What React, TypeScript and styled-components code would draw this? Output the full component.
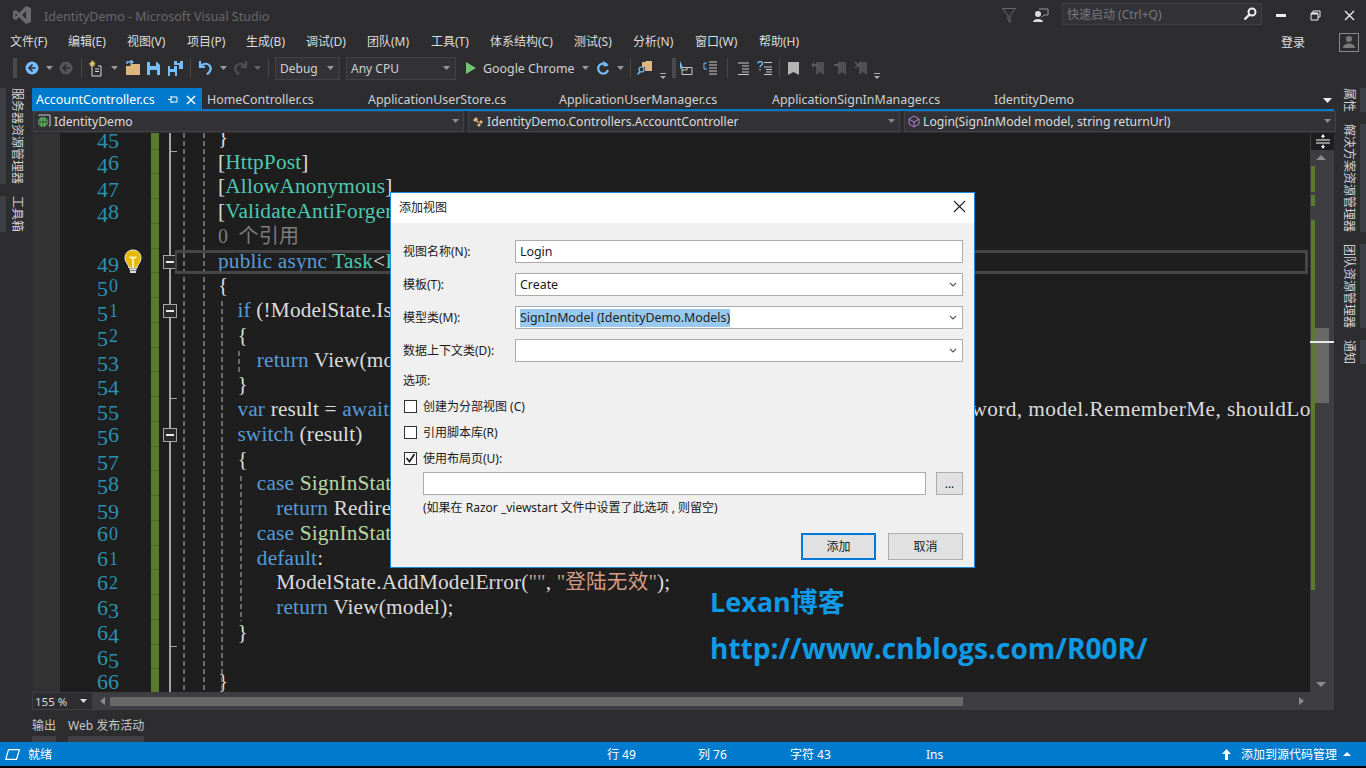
import React from "react";
import styled, { createGlobalStyle } from "styled-components";

const UI = `"Noto Sans", "Noto Sans CJK SC", sans-serif`;
const CODE = `"Liberation Serif", "Noto Sans CJK SC", serif`;

const GlobalStyle = createGlobalStyle`
  html, body { margin: 0; padding: 0; background: #000; }
  * { box-sizing: border-box; }
`;

const Shell = styled.div`
  position: relative;
  width: 1366px;
  height: 768px;
  overflow: hidden;
  display: flex;
  flex-direction: column;
  background: #2d2d30;
  color: #d0d0d0;
  font: 12px ${UI};
`;

/* title bar */
const TitleBar = styled.div`
  height: 30px;
  display: flex;
  align-items: center;
  padding-left: 12px;
`;
const TitleText = styled.div`
  margin-left: 12px;
  padding-top: 2px;
  font-size: 12.5px;
  color: #68686c;
  flex: 1;
`;
const QuickLaunch = styled.div`
  align-self: flex-start;
  width: 200px;
  height: 22px;
  margin: 3px 2px 0 5px;
  border: 1px solid #3f3f46;
  background: #333337;
  color: #78787c;
  display: flex;
  align-items: center;
  justify-content: space-between;
  padding: 0 4px 0 4px;
`;
const WinButton = styled.div`
  width: 34px;
  height: 30px;
  display: flex;
  align-items: center;
  justify-content: center;
`;

/* menu */
const MenuBar = styled.div`
  height: 24px;
  display: flex;
  align-items: center;
  padding-left: 10px;
`;
const MenuItem = styled.div<{ $w: number }>`
  width: ${(p) => p.$w}px;
  margin-bottom: 2px;
  color: #dcdcdc;
  font-size: 12px;
  white-space: nowrap;
`;
const Account = styled.div`
  margin-left: auto;
  display: flex;
  align-items: center;
  gap: 34px;
  padding-right: 7px;
  color: #e0e0e0;
`;
const Avatar = styled.div`
  width: 20px;
  height: 19px;
  border: 1px solid #8a8a8a;
  display: flex;
  align-items: center;
  justify-content: center;
`;

/* toolbar */
const ToolBar = styled.div`
  height: 30px;
  display: flex;
  align-items: center;
  padding: 0 0 2px 13px;
`;
const Slot = styled.div<{ $w: number; $low?: boolean }>`
  flex: 0 0 ${(p) => p.$w}px;
  height: 24px;
  display: flex;
  align-items: ${(p) => (p.$low ? "flex-end" : "center")};
  justify-content: center;
`;
const Grip = styled.div`
  flex: 0 0 4px;
  height: 20px;
  background-image: radial-gradient(#4a4a4e 1px, transparent 1px);
  background-size: 2px 3px;
`;
const Sep = styled.div`
  width: 1px;
  height: 20px;
  background: #46464a;
`;
const ToolCombo = styled.div<{ $w: number; $ml: number }>`
  flex: 0 0 ${(p) => p.$w}px;
  margin-left: ${(p) => p.$ml}px;
  height: 23px;
  border: 1px solid #434346;
  background: #333337;
  color: #d0d0d0;
  display: flex;
  align-items: center;
  justify-content: space-between;
  padding: 0 5px 0 4px;
`;
const ToolLabel = styled.div`
  flex: 0 0 93px;
  white-space: nowrap;
  font-size: 12.4px;
  color: #d0d0d0;
`;

/* body */
const Main = styled.div`
  height: 658px;
  display: flex;
`;
const Rail = styled.div<{ $w: number }>`
  flex: 0 0 ${(p) => p.$w}px;
  padding-top: 4px;
  display: flex;
  flex-direction: column;
  gap: 12px;
`;
const RailTab = styled.div<{ $right?: boolean }>`
  align-self: ${(p) => (p.$right ? "flex-end" : "flex-start")};
  ${(p) =>
    p.$right
      ? "border-right: 6px solid #3f3f46; padding-right: 4px;"
      : "border-left: 6px solid #3f3f46; padding-left: 4px;"}
  writing-mode: vertical-rl;
  text-orientation: sideways;
  font-size: 12px;
  line-height: 14px;
  color: #d8d0d8;
  white-space: nowrap;
`;
const Center = styled.div`
  flex: 1;
  display: flex;
  flex-direction: column;
  padding-top: 4px;
  padding-right: 4px;
  min-width: 0;
`;
const TabStrip = styled.div`
  height: 23px;
  display: flex;
  border-bottom: 2px solid #007acc;
  position: relative;
`;
const Tab = styled.div<{ $w: number; $active?: boolean }>`
  flex: 0 0 ${(p) => p.$w}px;
  display: flex;
  align-items: center;
  padding-left: ${(p) => (p.$active ? 4 : 5)}px;
  padding-top: 3px;
  background: ${(p) => (p.$active ? "#007acc" : "transparent")};
  color: ${(p) => (p.$active ? "#fff" : "#d0d0d0")};
  font-size: 12.4px;
  white-space: nowrap;
`;
const TabTools = styled.div`
  margin-left: auto;
  display: flex;
  align-items: center;
  gap: 8px;
  padding-right: 6px;
`;
const TabMenu = styled.div`
  margin-left: auto;
  align-self: center;
  margin-top: 3px;
  padding-right: 2px;
  display: flex;
`;
const NavBar = styled.div`
  height: 21px;
  display: grid;
  grid-template-columns: 431px 432px 432px;
  column-gap: 4px;
  padding: 0 1px;
`;
const NavCombo = styled.div`
  border: 1px solid #434346;
  background: #333337;
  display: flex;
  align-items: center;
  gap: 3px;
  padding: 0 4px 0 3px;
  font-size: 12.2px;
  color: #dcdcdc;
  white-space: nowrap;
  & > span { flex: 1; }
`;

/* editor */
const EditorRow = styled.div`
  position: relative;
  height: 560px;
  margin-top: 1px;
  display: flex;
  overflow: hidden;
  background: #1e1e1e;
`;
const SelectionMargin = styled.div`
  flex: 0 0 28px;
  background: #333333;
  border-left: 1px solid #2d2d30;
`;
const Lines = styled.div`
  flex: 1;
  margin-top: -8px;
  min-width: 0;
`;
const Line = styled.div`
  height: 24.75px;
  display: flex;
  font: 21.3px/24.75px ${CODE};
  letter-spacing: 0.18px;
  color: #dcdcdc;
  white-space: nowrap;
`;
const LineNo = styled.div`
  flex: 0 0 59px;
  text-align: right;
  color: #2b91af;
  font-size: 22px;
  letter-spacing: 0;
`;
/* the reference font has old-style figures: 3 4 5 7 9 hang, 0 1 2 sit small */
const Digit = styled.span<{ $kind: "low" | "hang" | "tall" }>`
  display: inline-block;
  width: 11px;
  text-align: center;
  ${(p) => p.$kind === "low" && "font-size: 18px;"}
  ${(p) => p.$kind === "hang" && "vertical-align: -4px;"}
  ${(p) => p.$kind === "tall" && "vertical-align: -1px;"}
`;
const Spacer32 = styled.div`
  flex: 0 0 32px;
`;
const Change = styled.div`
  flex: 0 0 8px;
  background: #5a7a2e;
  border-bottom: 1px solid #4c6827;
`;
const Fold = styled.div`
  flex: 0 0 59px;
  position: relative;
  &::before {
    content: "";
    position: absolute;
    left: 10px;
    top: 0;
    bottom: 0;
    width: 2px;
    background: #a5a5a5;
  }
`;
const FoldBox = styled.div`
  position: absolute;
  left: 4px;
  top: 6px;
  width: 14px;
  height: 14px;
  background: #2a2a2a;
  border: 1px solid #a5a5a5;
  display: flex;
  align-items: center;
  justify-content: center;
  &::after {
    content: "";
    width: 8px;
    height: 2px;
    background: #e8e8e8;
  }
`;
const FoldTick = styled.div`
  position: absolute;
  left: 11px;
  top: 1px;
  width: 7px;
  height: 1px;
  background: #a5a5a5;
`;
const Code = styled.div<{ $level?: number }>`
  padding-left: ${(p) => (p.$level || 0) * 19.4}px;
  flex: 1;
  min-width: 0;
  overflow: hidden;
`;
const Head = styled.span<{ $w: number }>`
  display: inline-block;
  vertical-align: top;
  width: ${(p) => p.$w}px;
  overflow: hidden;
`;
const Tail = styled.span`
  letter-spacing: 0.42px;
`;
const Kw = styled.span`
  color: #569cd6;
`;
const Ty = styled.span`
  color: #4ec9b0;
`;
const En = styled.span`
  color: #b8d7a3;
`;
const Str = styled.span`
  color: #d69d85;
  font-size: 20.6px;
`;
const Lens = styled.span`
  color: #7c7c7c;
  font-size: 20px;
`;
const Guide = styled.div<{ $x: number; $top: number; $h: number }>`
  position: absolute;
  left: ${(p) => p.$x}px;
  top: ${(p) => p.$top}px;
  height: ${(p) => p.$h}px;
  width: 2px;
  background-image: repeating-linear-gradient(#6a6a6a 0 5px, transparent 5px 8px);
`;
const CurrentLine = styled.div`
  position: absolute;
  left: 143px;
  right: 26px;
  top: 117px;
  height: 24px;
  border: 3px solid #464646;
  border-left-width: 2px;
  pointer-events: none;
`;
const Bulb = styled.div`
  position: absolute;
  left: 92px;
  top: 116px;
`;
const VScroll = styled.div`
  position: absolute;
  right: 0;
  top: 0;
  bottom: 0;
  width: 24px;
  background: #3e3e42;
`;
const Splitter = styled.div`
  height: 17px;
  margin-left: 1px;
  background: #1e1e1e;
  display: flex;
  align-items: center;
  justify-content: center;
`;
const Arrow = styled.div<{ $down?: boolean }>`
  position: absolute;
  left: 6px;
  ${(p) => (p.$down ? "bottom: 5px;" : "top: 22px;")}
  border-left: 5px solid transparent;
  border-right: 5px solid transparent;
  ${(p) => (p.$down ? "border-top: 5px solid #8a8a8a;" : "border-bottom: 5px solid #8a8a8a;")}
`;
const MapMark = styled.div<{ $top: number; $h: number }>`
  position: absolute;
  left: 1px;
  top: ${(p) => p.$top}px;
  height: ${(p) => p.$h}px;
  width: 4px;
  background: #5a7a2e;
`;
const Thumb = styled.div`
  position: absolute;
  left: 5px;
  top: 195px;
  width: 14px;
  height: 75px;
  background: #686868;
`;
const Caret = styled.div`
  position: absolute;
  left: 0;
  right: 0;
  top: 208px;
  height: 2px;
  background: #e8e8e8;
`;
const HScroll = styled.div`
  height: 18px;
  display: flex;
  align-items: center;
  background: #3e3e42;
  position: relative;
`;
const ZoomBox = styled.div`
  flex: 0 0 59px;
  height: 16px;
  margin-left: 1px;
  background: #2d2d30;
  display: flex;
  align-items: center;
  justify-content: space-between;
  padding: 0 5px 0 2px;
  font-size: 11.5px;
  color: #dcdcdc;
`;
const HArrow = styled.div<{ $left?: boolean }>`
  ${(p) => (p.$left ? "margin-left: 8px;" : "margin-left: 336px;")}
  border-top: 4px solid transparent;
  border-bottom: 4px solid transparent;
  ${(p) => (p.$left ? "border-right: 5px solid #8a8a8a;" : "border-left: 5px solid #8a8a8a;")}
`;
const HThumb = styled.div`
  flex: 0 0 853px;
  margin-left: 5px;
  height: 9px;
  background: #686868;
`;
const OutputTabs = styled.div`
  flex: 1;
  display: flex;
  gap: 12px;
  align-items: flex-end;
`;
const OutputTab = styled.div`
  height: 32px;
  border-bottom: 6px solid #3f3f46;
  padding-top: 6px;
  font-size: 12px;
  color: #c8c8c8;
  white-space: nowrap;
`;

/* status */
const StatusBar = styled.div`
  height: 24px;
  background: #007acc;
  color: #fff;
  display: flex;
  align-items: center;
  padding-left: 5px;
  font-size: 12px;
`;
const StatusCell = styled.div<{ $w: number }>`
  flex: 0 0 ${(p) => p.$w}px;
  white-space: nowrap;
`;
const BlackEdge = styled.div`
  height: 2px;
  background: #000;
`;

/* dialog */
const Dialog = styled.div`
  position: absolute;
  left: 390px;
  top: 192px;
  width: 585px;
  height: 376px;
  background: #f0f0f0;
  border: 1px solid #1b88d8;
  color: #1a1a1a;
  font-size: 12px;
`;
const DialogTitle = styled.div`
  height: 30px;
  background: #fff;
  display: flex;
  align-items: center;
  justify-content: space-between;
  padding: 0 8px 3px;
`;
const DialogBody = styled.div`
  padding: 17px 11px 0 12px;
`;
const Field = styled.div`
  display: grid;
  grid-template-columns: 112px 1fr;
  align-items: center;
  height: 23px;
  margin-bottom: 10px;
  & > span:first-child { margin-top: -2px; }
`;
const InputBox = styled.div`
  height: 23px;
  background: #fff;
  border: 1px solid #ababab;
  display: flex;
  align-items: center;
  justify-content: space-between;
  padding: 0 5px 0 4px;
  color: #1a1a1a;
  font-size: 12.4px;
`;
const Selected = styled.span`
  background: #99c9ef;
  color: #222;
  line-height: 18px;
`;
const SectionLabel = styled.div`
  height: 18px;
  line-height: 18px;
  margin: 0 0 3px;
`;
const CheckRow = styled.div`
  height: 26px;
  display: flex;
  align-items: center;
  gap: 6px;
  margin-left: 1px;
`;
const CheckBox = styled.div`
  width: 13px;
  height: 13px;
  background: #fff;
  border: 1px solid #333;
  display: flex;
  align-items: center;
  justify-content: center;
`;
const LayoutRow = styled.div`
  display: flex;
  gap: 10px;
  margin: 1px 0 0 20px;
`;
const LayoutInput = styled(InputBox)`
  width: 503px;
`;
const SmallButton = styled.div`
  width: 27px;
  height: 23px;
  background: #e1e1e1;
  border: 1px solid #adadad;
  text-align: center;
  line-height: 22px;
`;
const Hint = styled.div`
  margin-left: 20px;
  height: 25px;
  line-height: 25px;
  white-space: nowrap;
`;
const DialogButtons = styled.div`
  margin-top: 13px;
  display: flex;
  justify-content: flex-end;
  gap: 12px;
`;
const DialogButton = styled.div<{ $primary?: boolean }>`
  width: 75px;
  height: 27px;
  background: #e1e1e1;
  border: 1px solid ${(p) => (p.$primary ? "#0078d7" : "#adadad")};
  ${(p) => p.$primary && "box-shadow: inset 0 0 0 1px #0078d7;"}
  text-align: center;
  line-height: 25px;
`;

const Watermark = styled.div`
  position: absolute;
  left: 710px;
  top: 579px;
  color: #0f9ae6;
  font: 700 28.05px/46px "Open Sans", "Noto Sans CJK SC", sans-serif;
  white-space: nowrap;
`;
const WatermarkName = styled.div`
  font-size: 27px;
`;

const Down = ({ c = "#bbb", w = 7 }: { c?: string; w?: number }) => (
  <svg width={w} height={4} viewBox="0 0 7 4">
    <path d="M0 0h7L3.5 4z" fill={c} />
  </svg>
);
const LowDown = () => (
  <svg width="8" height="8" viewBox="0 0 8 8">
    <path d="M1 1h6v1H1zM1 4h6L4 7z" fill="#aaa" />
  </svg>
);
const Chevron = () => (
  <svg width="8" height="5" viewBox="0 0 8 5">
    <path d="M1 1l3 3 3-3" fill="none" stroke="#555" strokeWidth="1.1" />
  </svg>
);

const VsLogo = () => (
  <svg width="20" height="20" viewBox="0 0 20 20">
    <path
      fillRule="evenodd"
      d="M14 1l5 2v14l-5 2-7-7-3 3-3-1.5v-7L4 5l3 3zM14 6l-4 4 4 4zM3.500 8v4l2-2z"
      fill="#6b6b6e"
    />
  </svg>
);
const BackIcon = ({ c, a }: { c: string; a: string }) => (
  <svg width="14" height="14" viewBox="0 0 14 14">
    <circle cx="7" cy="7" r="6.500" fill={c} />
    <path d="M7.500 3.500L4 7l3.500 3.500M4 7h6.500" stroke={a} strokeWidth="1.600" fill="none" />
  </svg>
);
const NewIcon = () => (
  <svg width="16" height="17" viewBox="0 0 16 17">
    <path d="M4 6v10h9V6h-3" fill="none" stroke="#ddd" />
    <path d="M7 9h4M7 11.500h4" stroke="#ddd" />
    <path d="M4 0l1 2 2-1-1 2 2 1-2 .5 1 2-2-1-1 2-.5-2-2 1 1-2-2-.5 2-1z" fill="#e8c46a" />
  </svg>
);
const OpenIcon = () => (
  <svg width="16" height="16" viewBox="0 0 16 16">
    <path d="M1 6h4l1-2h9v11H1z" fill="#dcb67a" />
    <path d="M2 4V2h5M5.500 0L8 2 5.500 4" fill="none" stroke="#75beff" strokeWidth="1.300" />
  </svg>
);
const SaveIcon = () => (
  <svg width="13" height="13" viewBox="0 0 13 13">
    <path d="M0 0h10l3 3v10H0z" fill="#75beff" />
    <path d="M3 0h6v4H3zM3 8h7v5H3z" fill="#2d2d30" />
  </svg>
);
const SaveAllIcon = () => (
  <svg width="15" height="15" viewBox="0 0 15 15">
    <path d="M6 0h9v8h-4V4H6z" fill="#75beff" />
    <path d="M0 5h9v10H0z" fill="#75beff" />
    <path d="M2 5h4v3H2zM2 11h5v4H2zM9 0h3v2H9z" fill="#2d2d30" />
  </svg>
);
const UndoIcon = ({ c }: { c: string }) => (
  <svg width="15" height="16" viewBox="0 0 15 16">
    <path d="M2 1v6h5M2.500 6.500C5 3 9 3 11.500 5.500c2.500 3 1 6-2.500 9" fill="none" stroke={c} strokeWidth="2.200" />
  </svg>
);
const RedoIcon = () => (
  <svg width="15" height="16" viewBox="0 0 15 16">
    <path d="M13 1v6H8M12.500 6.500C10 3 6 3 3.500 5.500c-2.500 3-1 6 2.500 9" fill="none" stroke="#505052" strokeWidth="2.200" />
  </svg>
);
const PlayIcon = () => (
  <svg width="10" height="12" viewBox="0 0 10 12">
    <path d="M0 0l10 6-10 6z" fill="#71c671" />
  </svg>
);
const RefreshIcon = () => (
  <svg width="14" height="15" viewBox="0 0 14 15">
    <path d="M11.500 5A5 5 0 1 0 12 9" fill="none" stroke="#75beff" strokeWidth="2.200" />
    <path d="M7 0l5 3-4 3z" fill="#75beff" />
  </svg>
);
const FolderSearchIcon = () => (
  <svg width="16" height="16" viewBox="0 0 16 16">
    <path d="M5 2h3l1-1h6v10H8V7H5z" fill="#dcb67a" />
    <circle cx="4.500" cy="9.500" r="2.500" fill="none" stroke="#75beff" strokeWidth="1.200" />
    <path d="M3 11.500L.5 14.500" stroke="#75beff" strokeWidth="1.500" />
  </svg>
);
const CommentIcon = () => (
  <svg width="14" height="15" viewBox="0 0 14 15">
    <path d="M1 0v8l2.500-2.500z" fill="#75beff" />
    <path d="M3 6.500h10v7H3zM3 9h5V6.500" fill="none" stroke="#ccc" />
  </svg>
);
const ListIcon = () => (
  <svg width="15" height="15" viewBox="0 0 15 15">
    <path d="M6 1h8M6 4h8M6 7h8M6 10h8M6 13h8" stroke="#ccc" />
    <path d="M4 2H1v6h3" fill="none" stroke="#75beff" />
  </svg>
);
const IndentIcon = () => (
  <svg width="13" height="13" viewBox="0 0 13 13">
    <path d="M1 1h11M5 4h7M5 7h7M5 10h7M1 12.500h11" stroke="#ccc" />
  </svg>
);
const HelpIndentIcon = () => (
  <svg width="15" height="14" viewBox="0 0 15 14">
    <path d="M7 6h8M9 8.500h6M9 11h6M7 13.500h8M7 1.500h8" stroke="#ccc" />
    <path d="M1 2.500C1 0 5.500 0 5.500 2.500 5.500 4.500 3 4 3 6.500M3 8v1.500" fill="none" stroke="#75beff" strokeWidth="1.400" />
  </svg>
);
const BookmarkIcon = ({ c = "#b4b4b4", mark }: { c?: string; mark?: "l" | "r" | "x" }) => (
  <svg width="15" height="15" viewBox="0 0 15 15">
    <path d={mark ? "M5 1h8v13l-4-3-4 3z" : "M2 1h11v13l-5.500-3L2 14z"} fill={c} />
    {mark === "l" && <path d="M0 4l3-3v2h4v2H3v2z" fill="#5a5a5c" />}
    {mark === "r" && <path d="M8 4L5 1v2H1v2h4v2z" fill="#5a5a5c" />}
    {mark === "x" && <path d="M1 1l6 6M7 1L1 7" stroke="#5a5a5c" strokeWidth="1.500" />}
  </svg>
);
const ProjectIcon = () => (
  <svg width="14" height="14" viewBox="0 0 14 14">
    <path d="M2 2V1h11v11h-1" fill="none" stroke="#ccc" />
    <circle cx="6" cy="8" r="5" fill="#5fb85f" />
    <path d="M1 8h10M6 3v10M3 4.500v7M9 4.500v7" stroke="#2d2d30" strokeWidth=".7" />
  </svg>
);
const ClassIcon = () => (
  <svg width="12" height="13" viewBox="0 0 12 13">
    <path d="M1 5l3-3 2 2-1 1 2 2-1 1-2-2-1 1zM7 7l2-2 2 2-2 2zM5 10l2-2 2 2-2 2z" fill="#dcb67a" />
  </svg>
);
const CubeIcon = () => (
  <svg width="12" height="13" viewBox="0 0 12 13">
    <path d="M6 1l5 3v5l-5 3-5-3V4zM1 4l5 3 5-3M6 7v5" fill="none" stroke="#b180d7" />
  </svg>
);
const BulbIcon = () => (
  <svg width="18" height="26" viewBox="0 0 18 26">
    <path d="M9 1C4 1 1 4.500 1 9c0 4.500 3.500 6 4 10h8c.5-4 4-5.500 4-10C17 4.500 14 1 9 1z" fill="#e6b800" stroke="#e8e8e8" />
    <path d="M5.500 8.500h7M9 8.500v10" stroke="#f5f0c8" strokeWidth="1.800" />
    <path d="M5.500 20.500h7M6 23h6" stroke="#ddd" strokeWidth="1.800" />
  </svg>
);

const OldNum = ({ n }: { n: number }) => (
  <>
    {String(n)
      .split("")
      .map((d, i) => (
        <Digit key={i} $kind={"012".includes(d) ? "low" : "34579".includes(d) ? "hang" : "tall"}>
          {d}
        </Digit>
      ))}
  </>
);

const menus: [string, number][] = [
  ["文件(F)", 58],
  ["编辑(E)", 59],
  ["视图(V)", 60],
  ["项目(P)", 59],
  ["生成(B)", 60],
  ["调试(D)", 61],
  ["团队(M)", 64],
  ["工具(T)", 59],
  ["体系结构(C)", 84],
  ["测试(S)", 59],
  ["分析(N)", 62],
  ["窗口(W)", 64],
  ["帮助(H)", 60],
];

const docTabs: [string, number][] = [
  ["HomeController.cs", 161],
  ["ApplicationUserStore.cs", 191],
  ["ApplicationUserManager.cs", 213],
  ["ApplicationSignInManager.cs", 222],
  ["IdentityDemo", 120],
];

type Row = {
  no?: number;
  level?: number;
  box?: boolean;
  code?: React.ReactNode;
};

const rows: Row[] = [
  { no: 45, code: "}" },
  { no: 46, code: <>[<Ty>HttpPost</Ty>]</> },
  { no: 47, code: <>[<Ty>AllowAnonymous</Ty>]</> },
  { no: 48, code: <>[<Ty>ValidateAntiForgeryToken</Ty>]</> },
  { code: <Lens>0 &nbsp;个引用</Lens> },
  { no: 49, box: true, code: <><Kw>public async</Kw> <Ty>Task</Ty>&lt;<Ty>IActionResult</Ty>&gt; Login(SignInModel model)</> },
  { no: 50, code: "{" },
  { no: 51, box: true, level: 1, code: <><Kw>if</Kw> (!ModelState.IsValid)</> },
  { no: 52, level: 1, code: "{" },
  { no: 53, level: 2, code: <><Kw>return</Kw> View(model);</> },
  { no: 54, level: 1, code: "}" },
  {
    no: 55,
    level: 1,
    code: (
      <>
        <Head $w={734}>
          <Kw>var</Kw> result = <Kw>await</Kw> _signInManager
        </Head>
        <Tail>word, model.RememberMe, shouldLockout: false);</Tail>
      </>
    ),
  },
  { no: 56, box: true, level: 1, code: <><Kw>switch</Kw> (result)</> },
  { no: 57, level: 1, code: "{" },
  { no: 58, level: 2, code: <><Kw>case</Kw> <En>SignInStatus</En>.Success:</> },
  { no: 59, level: 3, code: <><Kw>return</Kw> RedirectToLocal(returnUrl);</> },
  { no: 60, level: 2, code: <><Kw>case</Kw> <En>SignInStatus</En>.Failure:</> },
  { no: 61, level: 2, code: <><Kw>default</Kw>:</> },
  { no: 62, level: 3, code: <>ModelState.AddModelError(<Str>""</Str>, <Str>"登陆无效"</Str>);</> },
  { no: 63, level: 3, code: <><Kw>return</Kw> View(model);</> },
  { no: 64, level: 1, code: "}" },
  { no: 65 },
  { no: 66, code: "}" },
];

const ticks = [1, 11, 21];

export default function App() {
  return (
    <Shell>
      <GlobalStyle />
      <TitleBar>
        <VsLogo />
        <TitleText>IdentityDemo - Microsoft Visual Studio</TitleText>
        <Slot $w={32}>
          <svg width="14" height="15" viewBox="0 0 14 15">
            <path d="M.5.500h13L8 7.500v7l-2-3v-4z" fill="none" stroke="#6a6a6c" />
          </svg>
        </Slot>
        <Slot $w={32}>
          <svg width="16" height="15" viewBox="0 0 16 15">
            <circle cx="5" cy="6" r="3" fill="#ddd" />
            <path d="M0 14c0-4 10-4 10 0z" fill="#ddd" />
            <path d="M6 1h9v6H11l-2 2" fill="none" stroke="#999" />
          </svg>
        </Slot>
        <QuickLaunch>
          快速启动 (Ctrl+Q)
          <svg width="14" height="14" viewBox="0 0 14 14">
            <circle cx="9" cy="5" r="3.500" fill="none" stroke="#eee" strokeWidth="2" />
            <path d="M6.500 7.500L1.500 12.500" stroke="#eee" strokeWidth="2.400" />
          </svg>
        </QuickLaunch>
        <WinButton>
          <svg width="10" height="4" viewBox="0 0 10 4"><path d="M0 1h10v3H0z" fill="#eee" /></svg>
        </WinButton>
        <WinButton>
          <svg width="11" height="11" viewBox="0 0 11 11">
            <path d="M3 3V1h7v6H8M1 3.500h7v6.500H1z" fill="none" stroke="#eee" />
            <path d="M1 3.500h7" stroke="#eee" strokeWidth="2" />
          </svg>
        </WinButton>
        <WinButton>
          <svg width="11" height="11" viewBox="0 0 11 11"><path d="M1 1l9 9M10 1l-9 9" stroke="#eee" strokeWidth="1.400" /></svg>
        </WinButton>
      </TitleBar>

      <MenuBar>
        {menus.map(([label, w]) => (
          <MenuItem key={label} $w={w}>{label}</MenuItem>
        ))}
        <Account>
          登录
          <Avatar>
            <svg width="12" height="14" viewBox="0 0 12 14">
              <circle cx="6" cy="4" r="3" fill="#7a7a7a" />
              <path d="M0 13c0-6 12-6 12 0z" fill="#7a7a7a" />
            </svg>
          </Avatar>
        </Account>
      </MenuBar>

      <ToolBar>
        <Grip />
        <Slot $w={6} />
        <Slot $w={18}><BackIcon c="#75beff" a="#2d2d30" /></Slot>
        <Slot $w={16}><Down c="#999" /></Slot>
        <Slot $w={18}><BackIcon c="#555558" a="#2d2d30" /></Slot>
        <Slot $w={12}><Sep /></Slot>
        <Slot $w={18}><NewIcon /></Slot>
        <Slot $w={18}><Down c="#999" /></Slot>
        <Slot $w={19}><OpenIcon /></Slot>
        <Slot $w={22}><SaveIcon /></Slot>
        <Slot $w={22}><SaveAllIcon /></Slot>
        <Slot $w={8}><Sep /></Slot>
        <Slot $w={22}><UndoIcon c="#75beff" /></Slot>
        <Slot $w={14}><Down c="#999" /></Slot>
        <Slot $w={20}><RedoIcon /></Slot>
        <Slot $w={14}><Down c="#666" /></Slot>
        <Slot $w={8}><Sep /></Slot>
        <ToolCombo $w={65} $ml={3}>Debug<Down c="#999" /></ToolCombo>
        <ToolCombo $w={110} $ml={6}>Any CPU<Down c="#999" /></ToolCombo>
        <Slot $w={6} />
        <Slot $w={18}><PlayIcon /></Slot>
        <Slot $w={3} />
        <ToolLabel>Google Chrome</ToolLabel>
        <Slot $w={18}><Down c="#999" /></Slot>
        <Slot $w={18}><RefreshIcon /></Slot>
        <Slot $w={16}><Down c="#999" /></Slot>
        <Slot $w={4}><Sep /></Slot>
        <Slot $w={4} />
        <Slot $w={18}><FolderSearchIcon /></Slot>
        <Slot $w={18} $low><LowDown /></Slot>
        <Grip />
        <Slot $w={1} />
        <Slot $w={18}><CommentIcon /></Slot>
        <Slot $w={6} />
        <Slot $w={18}><ListIcon /></Slot>
        <Slot $w={16}><Sep /></Slot>
        <Slot $w={16}><IndentIcon /></Slot>
        <Slot $w={26}><HelpIndentIcon /></Slot>
        <Slot $w={4}><Sep /></Slot>
        <Slot $w={24}><BookmarkIcon /></Slot>
        <Slot $w={26}><BookmarkIcon c="#505052" mark="l" /></Slot>
        <Slot $w={18}><BookmarkIcon c="#505052" mark="r" /></Slot>
        <Slot $w={24}><BookmarkIcon c="#505052" mark="x" /></Slot>
        <Slot $w={8} $low><LowDown /></Slot>
      </ToolBar>

      <Main>
        <Rail $w={32}>
          <RailTab>服务器资源管理器</RailTab>
          <RailTab>工具箱</RailTab>
        </Rail>
        <Center>
          <TabStrip>
            <Tab $w={170} $active>
              AccountController.cs
              <TabTools>
                <svg width="10" height="9" viewBox="0 0 10 9">
                  <path d="M0 4.500h3M3 1v7M3 2h6v5H3" fill="none" stroke="#fff" />
                </svg>
                <svg width="10" height="10" viewBox="0 0 10 10">
                  <path d="M1 1l8 8M9 1L1 9" stroke="#fff" strokeWidth="1.500" />
                </svg>
              </TabTools>
            </Tab>
            {docTabs.map(([label, w]) => (
              <Tab key={label} $w={w}>{label}</Tab>
            ))}
            <TabMenu>
              <svg width="9" height="6" viewBox="0 0 9 6"><path d="M0 1h9L4.500 6z" fill="#eee" /></svg>
            </TabMenu>
          </TabStrip>
          <NavBar>
            <NavCombo><ProjectIcon /><span>IdentityDemo</span><Down c="#888" /></NavCombo>
            <NavCombo><ClassIcon /><span>IdentityDemo.Controllers.AccountController</span><Down c="#888" /></NavCombo>
            <NavCombo><CubeIcon /><span>Login(SignInModel model, string returnUrl)</span><Down c="#888" /></NavCombo>
          </NavBar>
          <EditorRow>
            <SelectionMargin />
            <Lines>
              {rows.map((row, i) => (
                <Line key={i}>
                  <LineNo>{row.no && <OldNum n={row.no} />}</LineNo>
                  <Spacer32 />
                  <Change />
                  <Fold>
                    {row.box && <FoldBox />}
                    {ticks.includes(i) && <FoldTick />}
                  </Fold>
                  <Code $level={row.level}>{row.code}</Code>
                </Line>
              ))}
            </Lines>
            <Guide $x={151} $top={0} $h={560} />
            <Guide $x={171} $top={0} $h={560} />
            <Guide $x={189} $top={168} $h={392} />
            <Guide $x={206} $top={218} $h={23} />
            <Guide $x={208} $top={343} $h={145} />
            <CurrentLine />
            <Bulb><BulbIcon /></Bulb>
            <VScroll>
              <Splitter>
                <svg width="14" height="15" viewBox="0 0 14 15">
                  <path d="M0 6h14M0 9h14" stroke="#fff" />
                  <path d="M7 0l2 3H5zM7 15l-2-3h4z" fill="#fff" />
                  <path d="M7 2v2.500M7 10.500V13" stroke="#fff" />
                </svg>
              </Splitter>
              <Arrow />
              <MapMark $top={33} $h={26} />
              <MapMark $top={62} $h={11} />
              <MapMark $top={87} $h={370} />
              <Thumb />
              <Caret />
              <Arrow $down />
            </VScroll>
          </EditorRow>
          <HScroll>
            <ZoomBox>155 %<Down c="#ddd" /></ZoomBox>
            <HArrow $left />
            <HThumb />
            <HArrow />
          </HScroll>
          <OutputTabs>
            <OutputTab>输出</OutputTab>
            <OutputTab>Web 发布活动</OutputTab>
          </OutputTabs>
        </Center>
        <Rail $w={28}>
          <RailTab $right>属性</RailTab>
          <RailTab $right>解决方案资源管理器</RailTab>
          <RailTab $right>团队资源管理器</RailTab>
          <RailTab $right>通知</RailTab>
        </Rail>
      </Main>

      <StatusBar>
        <StatusCell $w={23}>
          <svg width="15" height="11" viewBox="0 0 15 11" style={{ display: "block" }}>
            <path d="M3.500.700h11L11.500 10.300H.8z" fill="none" stroke="#fff" strokeWidth="1.200" />
          </svg>
        </StatusCell>
        <StatusCell $w={579}>就绪</StatusCell>
        <StatusCell $w={91}>行 49</StatusCell>
        <StatusCell $w={92}>列 76</StatusCell>
        <StatusCell $w={136}>字符 43</StatusCell>
        <StatusCell $w={296}>Ins</StatusCell>
        <StatusCell $w={19}>
          <svg width="9" height="11" viewBox="0 0 9 11" style={{ display: "block" }}>
            <path d="M4.500 0L9 5H6v6H3V5H0z" fill="#fff" />
          </svg>
        </StatusCell>
        <StatusCell $w={102}>添加到源代码管理</StatusCell>
        <svg width="8" height="4" viewBox="0 0 8 4"><path d="M0 4h8L4 0z" fill="#fff" /></svg>
      </StatusBar>
      <BlackEdge />

      <Watermark>
        <WatermarkName>Lexan博客</WatermarkName>
        <div>http://www.cnblogs.com/R00R/</div>
      </Watermark>

      <Dialog>
        <DialogTitle>
          添加视图
          <svg width="13" height="13" viewBox="0 0 13 13"><path d="M1 1l11 11M12 1L1 12" stroke="#222" strokeWidth="1.100" /></svg>
        </DialogTitle>
        <DialogBody>
          <Field><span>视图名称(N):</span><InputBox>Login</InputBox></Field>
          <Field><span>模板(T):</span><InputBox>Create<Chevron /></InputBox></Field>
          <Field><span>模型类(M):</span><InputBox><Selected>SignInModel (IdentityDemo.Models)</Selected><Chevron /></InputBox></Field>
          <Field><span>数据上下文类(D):</span><InputBox><span /><Chevron /></InputBox></Field>
          <SectionLabel>选项:</SectionLabel>
          <CheckRow><CheckBox />创建为分部视图 (C)</CheckRow>
          <CheckRow><CheckBox />引用脚本库(R)</CheckRow>
          <CheckRow>
            <CheckBox>
              <svg width="11" height="10" viewBox="0 0 11 10"><path d="M1.500 5l3 3.500L9.500 1" fill="none" stroke="#222" strokeWidth="1.800" /></svg>
            </CheckBox>
            使用布局页(U):
          </CheckRow>
          <LayoutRow>
            <LayoutInput />
            <SmallButton>...</SmallButton>
          </LayoutRow>
          <Hint>(如果在 Razor _viewstart 文件中设置了此选项 , 则留空)</Hint>
          <DialogButtons>
            <DialogButton $primary>添加</DialogButton>
            <DialogButton>取消</DialogButton>
          </DialogButtons>
        </DialogBody>
      </Dialog>
    </Shell>
  );
}
